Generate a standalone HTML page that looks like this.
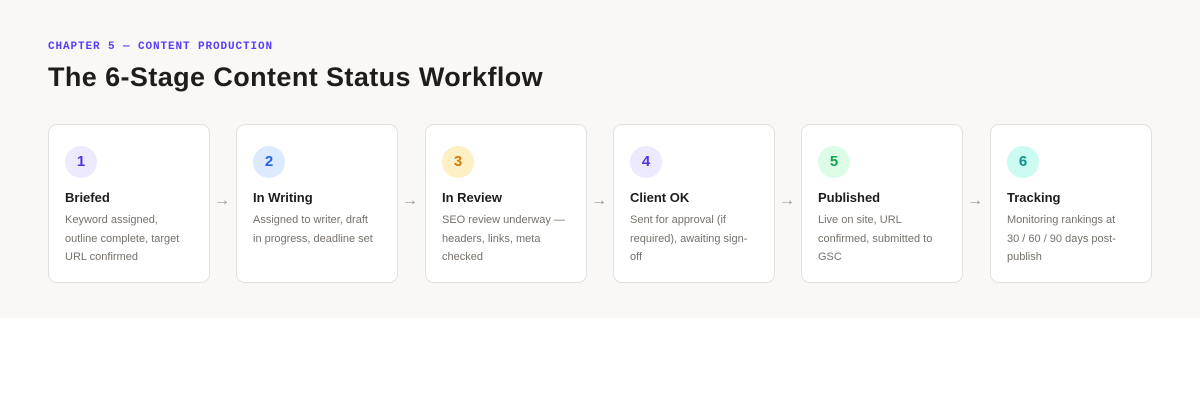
<!DOCTYPE html>
<html><head><meta charset="utf-8"><style>
*{margin:0;padding:0;box-sizing:border-box}
body{width:1200px;height:400px;background:#fff;font-family:"Liberation Sans",sans-serif;overflow:hidden}
.band{position:absolute;left:0;top:0;width:1200px;height:318px;background:#f9f8f6}
.kicker{position:absolute;left:48px;top:41px;font-family:"Liberation Mono",monospace;font-size:11px;letter-spacing:0.9px;color:#5b3df5;font-weight:bold}
h1{position:absolute;left:48px;top:62px;font-size:27px;font-weight:bold;color:#1f1d1b;letter-spacing:0.4px}
.card{position:absolute;top:124px;width:162px;height:159px;background:#fff;border:1px solid #e3e1dd;border-radius:9px}
.c{position:absolute;left:16px;top:21px;width:32px;height:32px;border-radius:50%;font-weight:bold;font-size:15px;text-align:center;line-height:32px}
.t{position:absolute;left:16px;top:65px;font-size:13px;font-weight:bold;color:#1f1d1b}
.d{position:absolute;left:16px;top:86px;width:123px;font-size:11px;line-height:18.5px;color:#76716b}
.arr{position:absolute;top:192px;font-size:16px;color:#9a9690}
</style></head><body>
<div class="band"></div>
<div class="kicker">CHAPTER 5 — CONTENT PRODUCTION</div>
<h1>The 6-Stage Content Status Workflow</h1>

<div class="card" style="left:48px"><div class="c" style="background:#ede9fe;color:#4f35e0">1</div><div class="t">Briefed</div><div class="d">Keyword assigned, outline complete, target URL confirmed</div></div>
<div class="arr" style="left:214px">→</div>
<div class="card" style="left:236px"><div class="c" style="background:#dbeafe;color:#2563eb">2</div><div class="t">In Writing</div><div class="d">Assigned to writer, draft in progress, deadline set</div></div>
<div class="arr" style="left:402px">→</div>
<div class="card" style="left:425px"><div class="c" style="background:#fdf0c4;color:#d97706">3</div><div class="t">In Review</div><div class="d">SEO review underway — headers, links, meta checked</div></div>
<div class="arr" style="left:591px">→</div>
<div class="card" style="left:613px"><div class="c" style="background:#ede9fe;color:#4f35e0">4</div><div class="t">Client OK</div><div class="d">Sent for approval (if required), awaiting sign-off</div></div>
<div class="arr" style="left:779px">→</div>
<div class="card" style="left:801px"><div class="c" style="background:#dcfce7;color:#16a34a">5</div><div class="t">Published</div><div class="d">Live on site, URL confirmed, submitted to GSC</div></div>
<div class="arr" style="left:967px">→</div>
<div class="card" style="left:990px"><div class="c" style="background:#ccfbf1;color:#0d9488">6</div><div class="t">Tracking</div><div class="d">Monitoring rankings at 30 / 60 / 90 days post-publish</div></div>
</body></html>
